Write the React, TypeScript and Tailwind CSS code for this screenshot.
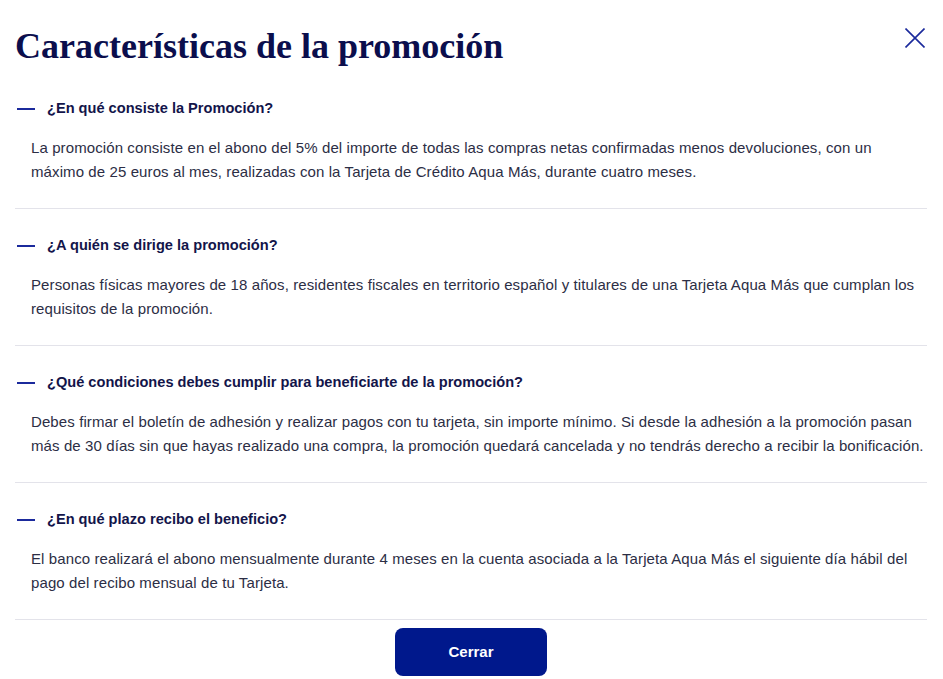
import { ReactElement } from 'react';

interface IFaq {
  question: string;
  answer: string;
}

const faqs: IFaq[] = [
  {
    question: '¿En qué consiste la Promoción?',
    answer:
      'La promoción consiste en el abono del 5% del importe de todas las compras netas confirmadas menos devoluciones, con un máximo de 25 euros al mes, realizadas con la Tarjeta de Crédito Aqua Más, durante cuatro meses.',
  },
  {
    question: '¿A quién se dirige la promoción?',
    answer:
      'Personas físicas mayores de 18 años, residentes fiscales en territorio español y titulares de una Tarjeta Aqua Más que cumplan los requisitos de la promoción.',
  },
  {
    question: '¿Qué condiciones debes cumplir para beneficiarte de la promoción?',
    answer:
      'Debes firmar el boletín de adhesión y realizar pagos con tu tarjeta, sin importe mínimo. Si desde la adhesión a la promoción pasan más de 30 días sin que hayas realizado una compra, la promoción quedará cancelada y no tendrás derecho a recibir la bonificación.',
  },
  {
    question: '¿En qué plazo recibo el beneficio?',
    answer:
      'El banco realizará el abono mensualmente durante 4 meses en la cuenta asociada a la Tarjeta Aqua Más el siguiente día hábil del pago del recibo mensual de tu Tarjeta.',
  },
];

export default function App(): ReactElement {
  return (
    <div className="min-h-[679px] w-full bg-white pl-[15px] pr-[16px] font-['Liberation_Sans',Arial,sans-serif]">
      <div className="flex items-start justify-between pt-6">
        <h1 className="font-['Liberation_Serif','Times_New_Roman',serif] text-[36px] leading-[44px] font-bold text-[#0b0e4d]">
          Características de la promoción
        </h1>
        <button className="mt-[4px] mr-[2px] p-0 text-[#1b2a9c]" aria-label="Cerrar">
          <svg width="20" height="20" viewBox="0 0 20 20" fill="none">
            <path d="M0.5 0.5L19.5 19.5M19.5 0.5L0.5 19.5" stroke="currentColor" strokeWidth="1.6" />
          </svg>
        </button>
      </div>

      <div className="mt-[4px]">
        {faqs.map((faq: IFaq) => (
          <div key={faq.question} className="border-b border-[#e3e3ea] pt-[27px] pb-[24px]">
            <div className="flex h-5 items-center">
              <span className="ml-[2px] h-[2px] w-[18px] bg-[#1b2a9c]" />
              <span className="ml-3 text-[14.6px] font-bold text-[#13154a]">{faq.question}</span>
            </div>
            <p className="mt-[17px] pl-4 text-[15px] leading-6 tracking-[0.1px] text-[#2c2e45]">
              {faq.answer}
            </p>
          </div>
        ))}
      </div>

      <div className="flex justify-center pt-[8px]">
        <button className="h-12 w-[152px] rounded-lg bg-[#00188c] text-[15px] font-bold text-white">
          Cerrar
        </button>
      </div>
    </div>
  );
}
